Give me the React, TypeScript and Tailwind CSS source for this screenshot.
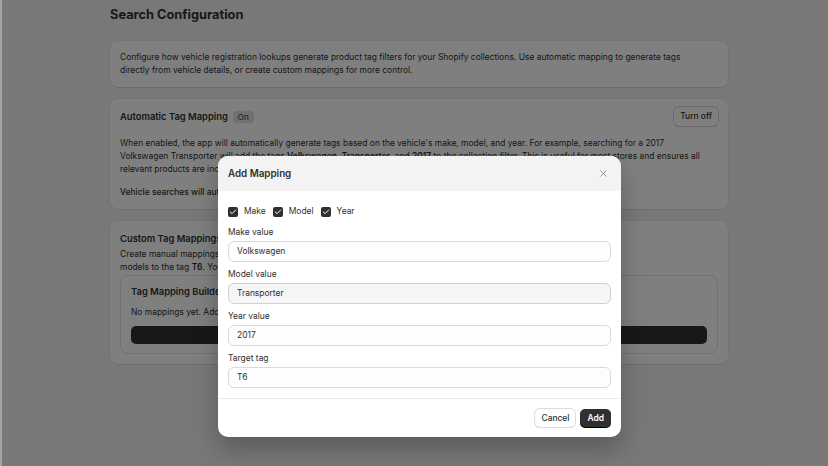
import { Check, X } from "lucide-react"

const fields = [
  { label: "Make value", value: "Volkswagen", muted: false },
  { label: "Model value", value: "Transporter", muted: true },
  { label: "Year value", value: "2017", muted: false },
  { label: "Target tag", value: "T6", muted: false },
]

const Checkbox = ({ label }: { label: string }) => (
  <label className="flex items-center gap-[6px]">
    <span className="flex h-[10px] w-[10px] items-center justify-center rounded-[2px] bg-[#303030]">
      <Check className="h-[8px] w-[8px] text-white" strokeWidth={3} />
    </span>
    <span>{label}</span>
  </label>
)

const Card = ({ children }: { children: React.ReactNode }) => (
  <div className="rounded-[8px] bg-white p-[10px] shadow-[0_1px_0_rgba(26,26,26,0.07),0_0_0_1px_rgba(26,26,26,0.04)]">
    {children}
  </div>
)

const App = () => {
  return (
    <div className="flex h-[466px] w-[828px] overflow-hidden font-['Inter',sans-serif] text-[8.45px] leading-[13px] text-[#303030]">
      <div className="w-[2px] shrink-0 bg-[#a4a4a4]" />
      <div className="relative flex-1 bg-[#f1f1f1]">
        {/* PAGE */}
        <div className="ml-[108px] w-[618px] pt-[7px]">
          <h1 className="text-[12.8px] font-bold leading-[16px] text-[#303030]">
            Search Configuration
          </h1>

          <div className="mt-[18px] flex flex-col gap-[12px]">
            {/*INTRO*/}
            <Card>
              <p>
                Configure how vehicle registration lookups generate product tag filters for your Shopify
                collections. Use automatic mapping to generate tags
                <br />
                directly from vehicle details, or create custom mappings for more control.
              </p>
            </Card>

            {/*AUTOMATIC*/}
            <Card>
              <div className="flex h-[15px] items-center justify-between">
                <div className="flex items-center gap-[5px]">
                  <h2 className="text-[9.4px] font-semibold">Automatic Tag Mapping</h2>
                  <span className="rounded-[4px] bg-[#e0e0e0] px-[5px] text-[8px] leading-[12px] text-[#303030]">
                    On
                  </span>
                </div>
                <button className="h-[19px] rounded-[5px] bg-white px-[6px] text-[8.45px] font-medium shadow-[0_0_0_1px_#d4d4d4,0_1px_0_#b5b5b5]">
                  Turn off
                </button>
              </div>
              <p className="mt-[13px]">
                When enabled, the app will automatically generate tags based on the vehicle's make, model, and
                year. For example, searching for a 2017
                <br />
                Volkswagen Transporter will add the tags <b className="font-semibold">Volkswagen</b>,{" "}
                <b className="font-semibold">Transporter</b>, and <b className="font-semibold">2017</b> to the
                collection filter. This is useful for most stores and ensures all
                <br />
                relevant products are included.
              </p>
              <p className="mt-[10px] font-medium">
                Vehicle searches will automatically generate tags from the vehicle details.
              </p>
            </Card>

            {/*CUSTOM*/}
            <Card>
              <h2 className="mt-[2px] text-[9.4px] font-semibold leading-[12px]">Custom Tag Mappings</h2>
              <p className="mt-[3px] leading-[12.5px]">
                Create manual mappings that override the automatic tags. For example, map Volkswagen Transporter{" "}
                <b className="font-semibold">2017</b>
                <br />
                models to the tag <b className="font-semibold">T6</b>. You can add as many mappings as you need.
              </p>
              <div className="mt-[2px] rounded-[8px] border border-[#e3e3e3] px-[10px] pb-[9px] pt-[9px]">
                <h3 className="text-[9.4px] font-semibold">Tag Mapping Builder</h3>
                <p className="mt-[8px]">No mappings yet. Add a mapping to get started.</p>
                <button className="mt-[7px] h-[18px] w-full rounded-[5px] bg-[#303030] text-[8.45px] font-semibold text-white">
                  Add mapping
                </button>
              </div>
            </Card>
          </div>
        </div>

        {/*OVERLAY*/}
        <div className="absolute inset-0 bg-black/50" />

        {/*MODAL*/}
        <div className="absolute left-[216px] top-[156px] w-[403px] overflow-hidden rounded-[10px] bg-white shadow-[0_12px_24px_rgba(0,0,0,0.25)]">
          <div className="flex h-[35px] items-center justify-between bg-[#f3f3f3] px-[10px]">
            <h2 className="text-[9.8px] font-semibold">Add Mapping</h2>
            <X className="mr-[2px] h-[11px] w-[11px] text-[#6b6b6b]" strokeWidth={1.6} />
          </div>

          <div className="flex flex-col px-[10px] pb-[10px] pt-[14px]">
            <div className="flex items-center gap-[7px]">
              <Checkbox label="Make" />
              <Checkbox label="Model" />
              <Checkbox label="Year" />
            </div>

            <div className="mt-[8px] flex flex-col gap-[6px]">
              {fields.map((field) => (
                <div key={field.label} className="flex flex-col gap-[2px]">
                  <span className="leading-[13px]">{field.label}</span>
                  <div
                    className={`flex h-[21px] items-center rounded-[6px] border px-[8px] ${
                      field.muted ? "border-[#d0d0d0] bg-[#f6f6f6]" : "border-[#dadada] bg-[#fdfdfd]"
                    }`}
                  >
                    {field.value}
                  </div>
                </div>
              ))}
            </div>
          </div>

          <div className="flex justify-end gap-[5px] border-t border-[#ebebeb] p-[10px]">
            <button className="h-[18px] rounded-[5px] bg-white px-[6px] font-medium shadow-[0_0_0_1px_#dcdcdc,0_1px_0_#c4c4c4]">
              Cancel
            </button>
            <button className="h-[18px] rounded-[5px] bg-[#303030] px-[7px] font-semibold text-white shadow-[0_1px_0_#000]">
              Add
            </button>
          </div>
        </div>
      </div>
    </div>
  )
}

export default App
